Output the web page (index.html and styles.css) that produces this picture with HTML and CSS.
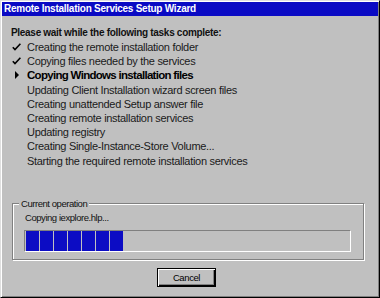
FILE: index.html
```html
<!DOCTYPE html>
<html lang="en">
<head>
  <meta charset="UTF-8" />
  <title>Remote Installation Services Setup Wizard</title>
  <link rel="stylesheet" href="styles.css">
</head>
<body>

  <div class="window">
    <div class="titlebar">Remote Installation Services Setup Wizard</div>

    <div class="content">
      <div class="heading">Please wait while the following tasks complete:</div>

      <!-- TASK LIST -->
      <ul class="tasks">
        <li class="done">
          <span class="mark"><svg width="9" height="8" viewBox="0 0 9 8"><path d="M0.8 4.2 L3 6.6 L8.4 0.8" fill="none" stroke="#000" stroke-width="1.6"/></svg></span>
          Creating the remote installation folder
        </li>
        <li class="done">
          <span class="mark"><svg width="9" height="8" viewBox="0 0 9 8"><path d="M0.8 4.2 L3 6.6 L8.4 0.8" fill="none" stroke="#000" stroke-width="1.6"/></svg></span>
          Copying files needed by the services
        </li>
        <li class="current">
          <span class="mark"><svg width="9" height="8" viewBox="0 0 9 8"><polygon points="2,0 6,4 2,8" fill="#000"/></svg></span>
          Copying Windows installation files
        </li>
        <li><span class="mark"></span>Updating Client Installation wizard screen files</li>
        <li><span class="mark"></span>Creating unattended Setup answer file</li>
        <li><span class="mark"></span>Creating remote installation services</li>
        <li><span class="mark"></span>Updating registry</li>
        <li><span class="mark"></span>Creating Single-Instance-Store Volume...</li>
        <li><span class="mark"></span>Starting the required remote installation services</li>
      </ul>

      <!-- CURRENT OPERATION -->
      <div class="group">
        <div class="group-label">Current operation</div>
        <div class="operation">Copying iexplore.hlp...</div>
        <div class="progress">
          <span class="block"></span>
          <span class="block"></span>
          <span class="block"></span>
          <span class="block"></span>
          <span class="block"></span>
          <span class="block"></span>
          <span class="block"></span>
        </div>
      </div>

      <div class="buttons">
        <button class="btn">Cancel</button>
      </div>
    </div>
  </div>

</body>
</html>
```

FILE: styles.css
```css
body {
  font-family: 'Liberation Sans', Arial, sans-serif;
  font-size: 11px;
  margin: 0;
  background: #c0c0c0;
  color: #111;
}

.window {
  width: 380px;
  height: 298px;
  box-sizing: border-box;
  padding: 1px;
  border: 1px solid;
  border-color: #dfdfdf #000 #000 #dfdfdf;
  box-shadow: inset 1px 1px 0 #fff, inset -1px -1px 0 #808080;
  background: #c0c0c0;
}

.titlebar {
  height: 14px;
  line-height: 14px;
  padding-left: 2px;
  background: #0a0ac4;
  color: #fff;
  font-size: 10px;
  font-weight: bold;
  letter-spacing: -0.25px;
  white-space: nowrap;
}

.content {
  padding: 10px 0 0 9px;
}

.heading {
  font-size: 10px;
  font-weight: bold;
  letter-spacing: -0.3px;
  line-height: 14px;
}

.tasks {
  list-style: none;
  margin: 0;
  padding: 0;
}

.tasks li {
  display: flex;
  align-items: center;
  height: 14.2px;
  color: #1a1a1a;
  letter-spacing: -0.3px;
}

.tasks .mark {
  width: 15px;
  flex-shrink: 0;
  display: flex;
  align-items: center;
  padding-left: 1px;
}

.tasks .current {
  font-weight: bold;
  font-size: 11.5px;
  letter-spacing: -0.7px;
  color: #000;
}

.tasks .current .mark {
  padding-left: 2px;
  width: 14px;
}

.group {
  margin-top: 35px;
  margin-left: 1px;
  width: 352px;
  border: 1px solid #808080;
  box-shadow: inset 1px 1px 0 #fff, 1px 1px 0 #fff;
  padding: 0 12px 7px 11px;
  box-sizing: border-box;
  font-size: 9.5px;
  letter-spacing: -0.45px;
}

.group-label {
  display: table;
  margin: -7px 0 0 -5px;
  padding: 0 2px;
  line-height: 14px;
  background: #c0c0c0;
}

.operation {
  line-height: 14px;
  padding-left: 1px;
}

.progress {
  margin-top: 5px;
  height: 22px;
  box-sizing: border-box;
  border: 1px solid;
  border-color: #808080 #fff #fff #808080;
  padding: 0 1px;
  display: flex;
  gap: 1px;
}

.progress .block {
  width: 13px;
  height: 20px;
  background: #0c0cc4;
}

.buttons {
  margin-top: 8px;
  padding-left: 146px;
}

.btn {
  width: 59px;
  height: 19px;
  padding: 0;
  font-family: 'Liberation Sans', Arial, sans-serif;
  font-size: 9.5px;
  letter-spacing: -0.4px;
  color: #000;
  background: #c0c0c0;
  border: 1px solid #000;
  box-shadow: inset 1px 1px 0 #fff, inset -1px -1px 0 #000, inset -2px -2px 0 #808080;
}
```
